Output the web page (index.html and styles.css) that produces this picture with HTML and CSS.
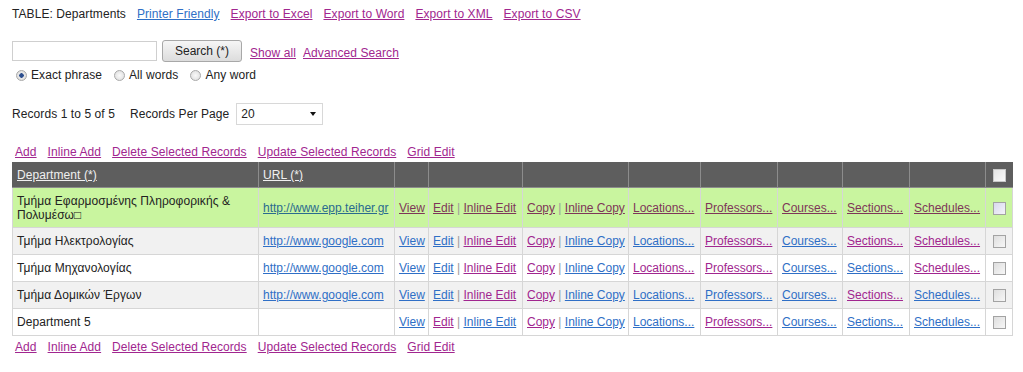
FILE: index.html
```html
<!DOCTYPE html>
<html lang="el">
<head>
  <meta charset="UTF-8">
  <title>TABLE: Departments</title>
  <link rel="stylesheet" href="styles.css">
</head>
<body>
  <div class="page">
    <div class="toolbar">
      <span>TABLE: Departments</span>
      <a href="#" class="new">Printer Friendly</a>
      <a href="#">Export to Excel</a>
      <a href="#">Export to Word</a>
      <a href="#">Export to XML</a>
      <a href="#">Export to CSV</a>
    </div>

    <form class="search" onsubmit="return false;">
      <div class="search-row">
        <input type="text" class="search-box">
        <button type="button" class="search-btn">Search (*)</button>
        <a href="#" class="show-all">Show all</a>
        <a href="#">Advanced Search</a>
      </div>
      <div class="radios">
        <label><input type="radio" name="mode" checked> Exact phrase</label>
        <label><input type="radio" name="mode"> All words</label>
        <label><input type="radio" name="mode"> Any word</label>
      </div>
    </form>

    <div class="records">
      <span>Records 1 to 5 of 5</span>
      <span class="per-page">Records Per Page</span>
      <span class="select-wrap">
        <select class="rpp">
          <option>20</option>
          <option>50</option>
          <option>100</option>
        </select>
      </span>
    </div>

    <div class="actions">
      <a href="#">Add</a>
      <a href="#">Inline Add</a>
      <a href="#">Delete Selected Records</a>
      <a href="#">Update Selected Records</a>
      <a href="#">Grid Edit</a>
    </div>

    <table class="grid">
      <colgroup>
        <col class="c-dept"><col class="c-url"><col class="c-view"><col class="c-edit"><col class="c-copy">
        <col class="c-loc"><col class="c-prof"><col class="c-course"><col class="c-sect"><col class="c-sched"><col class="c-chk">
      </colgroup>
      <thead>
        <tr>
          <th><a href="#">Department (*)</a></th>
          <th><a href="#">URL (*)</a></th>
          <th></th><th></th><th></th><th></th><th></th><th></th><th></th><th></th>
          <th class="chk"><input type="checkbox"></th>
        </tr>
      </thead>
      <tbody>
        <tr class="hover">
          <td>Τμήμα Εφαρμοσμένης Πληροφορικής &amp; Πολυμέσω□</td>
          <td><a href="#" class="new">http://www.epp.teiher.gr</a></td>
          <td><a href="#">View</a></td>
          <td><a href="#">Edit</a> <span class="sep">|</span> <a href="#">Inline Edit</a></td>
          <td><a href="#">Copy</a> <span class="sep">|</span> <a href="#">Inline Copy</a></td>
          <td><a href="#">Locations...</a></td>
          <td><a href="#">Professors...</a></td>
          <td><a href="#">Courses...</a></td>
          <td><a href="#">Sections...</a></td>
          <td><a href="#">Schedules...</a></td>
          <td class="chk"><input type="checkbox"></td>
        </tr>
        <tr class="alt">
          <td>Τμήμα Ηλεκτρολογίας</td>
          <td><a href="#" class="new">http://www.google.com</a></td>
          <td><a href="#" class="new">View</a></td>
          <td><a href="#" class="new">Edit</a> <span class="sep">|</span> <a href="#">Inline Edit</a></td>
          <td><a href="#">Copy</a> <span class="sep">|</span> <a href="#" class="new">Inline Copy</a></td>
          <td><a href="#" class="new">Locations...</a></td>
          <td><a href="#">Professors...</a></td>
          <td><a href="#" class="new">Courses...</a></td>
          <td><a href="#">Sections...</a></td>
          <td><a href="#">Schedules...</a></td>
          <td class="chk"><input type="checkbox"></td>
        </tr>
        <tr>
          <td>Τμήμα Μηχανολογίας</td>
          <td><a href="#" class="new">http://www.google.com</a></td>
          <td><a href="#" class="new">View</a></td>
          <td><a href="#" class="new">Edit</a> <span class="sep">|</span> <a href="#">Inline Edit</a></td>
          <td><a href="#">Copy</a> <span class="sep">|</span> <a href="#" class="new">Inline Copy</a></td>
          <td><a href="#">Locations...</a></td>
          <td><a href="#">Professors...</a></td>
          <td><a href="#" class="new">Courses...</a></td>
          <td><a href="#" class="new">Sections...</a></td>
          <td><a href="#">Schedules...</a></td>
          <td class="chk"><input type="checkbox"></td>
        </tr>
        <tr class="alt">
          <td>Τμήμα Δομικών Έργων</td>
          <td><a href="#" class="new">http://www.google.com</a></td>
          <td><a href="#" class="new">View</a></td>
          <td><a href="#" class="new">Edit</a> <span class="sep">|</span> <a href="#">Inline Edit</a></td>
          <td><a href="#">Copy</a> <span class="sep">|</span> <a href="#" class="new">Inline Copy</a></td>
          <td><a href="#" class="new">Locations...</a></td>
          <td><a href="#" class="new">Professors...</a></td>
          <td><a href="#" class="new">Courses...</a></td>
          <td><a href="#">Sections...</a></td>
          <td><a href="#" class="new">Schedules...</a></td>
          <td class="chk"><input type="checkbox"></td>
        </tr>
        <tr>
          <td>Department 5</td>
          <td></td>
          <td><a href="#" class="new">View</a></td>
          <td><a href="#">Edit</a> <span class="sep">|</span> <a href="#" class="new">Inline Edit</a></td>
          <td><a href="#">Copy</a> <span class="sep">|</span> <a href="#" class="new">Inline Copy</a></td>
          <td><a href="#" class="new">Locations...</a></td>
          <td><a href="#">Professors...</a></td>
          <td><a href="#" class="new">Courses...</a></td>
          <td><a href="#" class="new">Sections...</a></td>
          <td><a href="#" class="new">Schedules...</a></td>
          <td class="chk"><input type="checkbox"></td>
        </tr>
      </tbody>
    </table>

    <div class="actions bottom">
      <a href="#">Add</a>
      <a href="#">Inline Add</a>
      <a href="#">Delete Selected Records</a>
      <a href="#">Update Selected Records</a>
      <a href="#">Grid Edit</a>
    </div>
  </div>
</body>
</html>
```

FILE: styles.css
```css
body { margin: 0; background: #fff; color: #222; font-family: "Liberation Sans", Arial, sans-serif; font-size: 12px; line-height: 14px; letter-spacing: 0.08px; }
a { color: #a1268f; }
a.new { color: #2f6fc6; }
.page { padding: 7px 12px 0; }

.toolbar { display: flex; gap: 11px; }

.search { margin-top: 19px; }
.search-row { display: flex; align-items: center; }
.search-box { width: 145px; height: 20px; box-sizing: border-box; border: 1px solid #cfcfcf; margin: 0; padding: 1px 3px; font: inherit; }
.search-btn { margin: 0 0 0 5px; width: 80px; height: 22px; border: 1px solid #a8a8a8; border-radius: 3px; background: linear-gradient(#f6f6f6, #dcdcdc); font: inherit; font-size: 12px; color: #222; padding: 0; }
.show-all { margin: 3px 7px 0 8px; }
.search-row a:last-child { margin-top: 3px; }

.radios { display: flex; gap: 12px; margin-top: 6px; padding-left: 4px; }
.radios label { display: flex; align-items: center; gap: 4px; }
.radios input { appearance: none; -webkit-appearance: none; margin: 0; width: 11px; height: 11px; border: 1px solid #a9a9a9; border-radius: 50%; background: radial-gradient(#fafafa, #dadada); box-sizing: border-box; }
.radios input:checked { background: radial-gradient(#2d4f8f 0, #2d4f8f 2px, #e8e8e8 2.5px, #d8d8d8 100%); }

.records { display: flex; align-items: center; margin-top: 21px; }
.per-page { margin-left: 15px; }
.select-wrap { position: relative; margin-left: 7px; display: inline-block; }
.rpp { appearance: none; -webkit-appearance: none; width: 87px; height: 22px; border: 1px solid #d8d8d8; background: #fff; font: inherit; padding: 0 4px; color: #222; margin: 0; }
.select-wrap::after { content: ""; position: absolute; right: 7px; top: 9px; border-left: 3px solid transparent; border-right: 3px solid transparent; border-top: 4px solid #111; pointer-events: none; }

.actions { display: flex; gap: 11px; padding-left: 3px; margin-top: 20px; }
.actions.bottom { margin-top: 4px; }

.grid { width: 1000px; table-layout: fixed; border-collapse: collapse; margin-top: 3px; }
.c-dept { width: 246px; }
.c-url { width: 136px; }
.c-view { width: 34px; }
.c-edit { width: 94px; }
.c-copy { width: 106px; }
.c-loc { width: 72px; }
.c-prof { width: 77px; }
.c-course { width: 65px; }
.c-sect { width: 67px; }
.c-sched { width: 76px; }
.c-chk { width: 27px; }

.grid th { background: #5e5e5e; border: 1px solid #8c8c8c; border-top-color: #5e5e5e; height: 24px; padding: 0 4px; text-align: left; font-weight: normal; white-space: nowrap; }
.grid th:first-child { border-left-color: #5e5e5e; }
.grid th:last-child { border-right-color: #5e5e5e; }
.grid th a { color: #f0f0f0; }
.grid td { border: 1px solid #d6d6d6; padding: 6px 4px; white-space: nowrap; overflow: hidden; letter-spacing: 0; }
.grid td:first-child { white-space: normal; letter-spacing: 0.08px; }
.grid tr.alt td { background: #f1f1f1; }
.grid tr.hover td { background: #c9f59f; padding: 6px 4px 5px; }
.grid tr.hover a { color: #7e3658; }
.grid tr.hover a.new { color: #2a6b8e; }
.sep { color: #9a9a9a; }
.grid .chk { text-align: center; padding: 0; }
.chk input { appearance: none; -webkit-appearance: none; margin: 0; width: 13px; height: 13px; vertical-align: middle; border: 1px solid #a3a3a3; background: linear-gradient(135deg, #dedede, #f7f7f7); box-sizing: border-box; }
.grid th.chk input { border-color: #c8c8c8; background: linear-gradient(135deg, #e4e4e4, #fafafa); }
.grid tr.hover .chk input { background: linear-gradient(135deg, #d8d8ee, #f4f4fa); }
```
